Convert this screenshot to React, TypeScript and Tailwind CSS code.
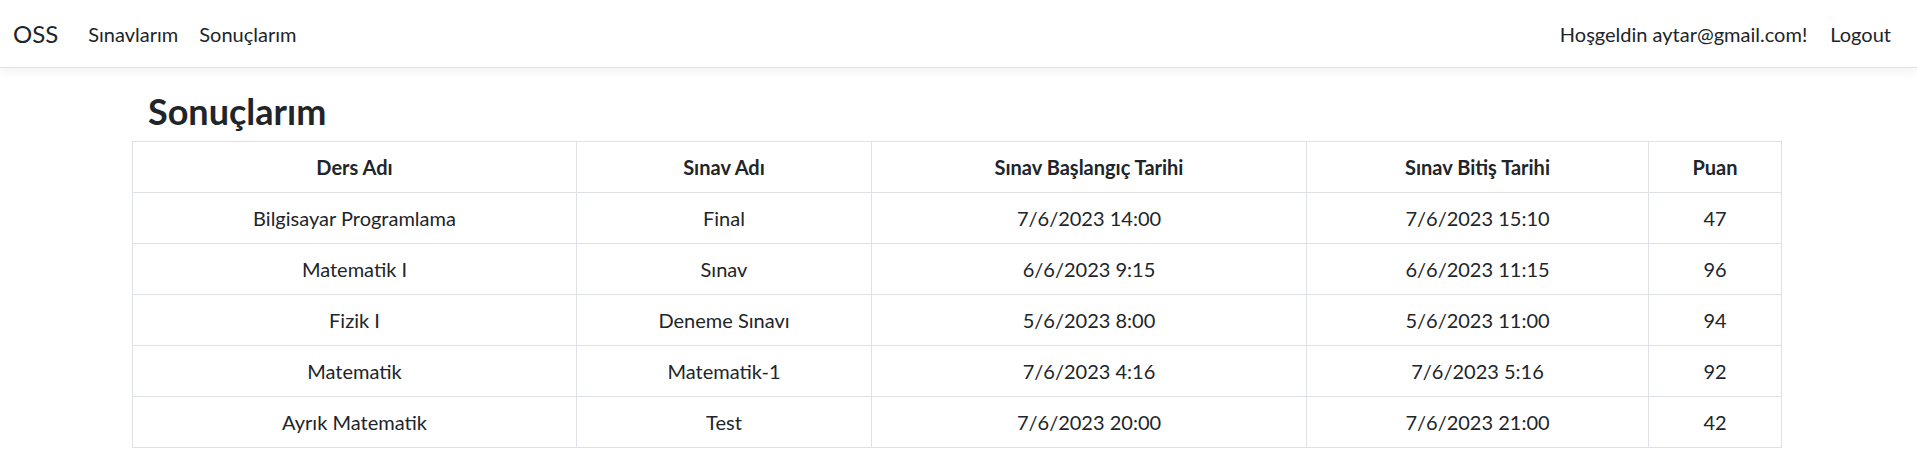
import React from 'react';

const rows = [
  ['Bilgisayar Programlama', 'Final', '7/6/2023 14:00', '7/6/2023 15:10', '47'],
  ['Matematik I', 'Sınav', '6/6/2023 9:15', '6/6/2023 11:15', '96'],
  ['Fizik I', 'Deneme Sınavı', '5/6/2023 8:00', '5/6/2023 11:00', '94'],
  ['Matematik', 'Matematik-1', '7/6/2023 4:16', '7/6/2023 5:16', '92'],
  ['Ayrık Matematik', 'Test', '7/6/2023 20:00', '7/6/2023 21:00', '42'],
];

const headers = ['Ders Adı', 'Sınav Adı', 'Sınav Başlangıç Tarihi', 'Sınav Bitiş Tarihi', 'Puan'];
const widths = ['w-[444px]', 'w-[295px]', 'w-[435px]', 'w-[342px]', 'w-[133px]'];

export default function App() {
  return (
    <div className="min-h-screen bg-white text-[#212529] font-['Segoe_UI','Lato',sans-serif]">
      {/* Navbar */}
      <nav className="h-[68px] flex items-center justify-between pl-[13px] pr-[26px] border-b border-[#dee2e6] shadow-[0_4px_10px_rgba(0,0,0,0.05)]">
        <div className="flex items-center">
          <a className="text-[24px] leading-none mr-[30px]">OSS</a>
          <a className="text-[20px] mr-[21px]">Sınavlarım</a>
          <a className="text-[20px]">Sonuçlarım</a>
        </div>
        <div className="flex items-center text-[20px]">
          <span className="mr-[23px]">Hoşgeldin aytar@gmail.com!</span>
          <a>Logout</a>
        </div>
      </nav>

      <main className="ml-[132px] w-[1649px]">
        <h2 className="text-[36px] font-bold leading-[48px] pl-[16px] mt-[19px] mb-[6px]">Sonuçlarım</h2>
        <table className="w-full border-collapse table-fixed text-[20px]">
          <thead>
            <tr className="h-[51px]">
              {headers.map((h, i) => (
                <th key={h} className={`${widths[i]} border border-[#dee2e6] text-center font-bold`}>
                  {h}
                </th>
              ))}
            </tr>
          </thead>
          <tbody>
            {rows.map((r) => (
              <tr key={r[0]} className="h-[51px]">
                {r.map((c, i) => (
                  <td key={i} className="border border-[#dee2e6] text-center">
                    {c}
                  </td>
                ))}
              </tr>
            ))}
          </tbody>
        </table>
      </main>
    </div>
  );
}
